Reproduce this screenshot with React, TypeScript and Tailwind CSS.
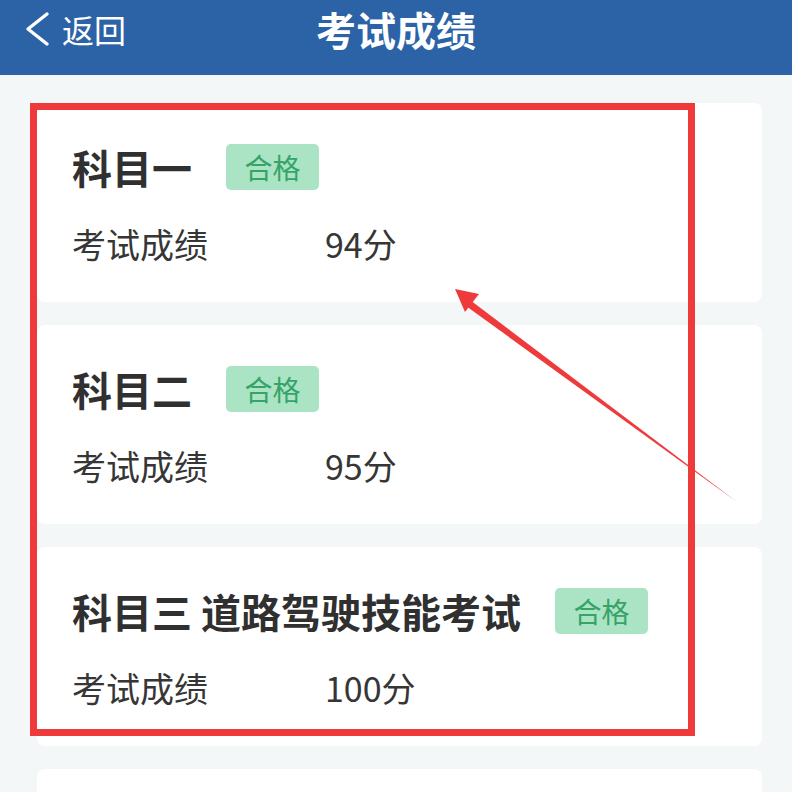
type Subject = {
  name: string;
  score: string;
};

const subjects: Subject[] = [
  { name: '科目一', score: '94分' },
  { name: '科目二', score: '95分' },
  { name: '科目三 道路驾驶技能考试', score: '100分' },
];

function ScoreCard({ s }: { s: Subject }) {
  return (
    <div className="h-[199px] shrink-0 rounded-lg bg-white pl-[35px] pt-[41px]">
      <div className="flex h-[46px] items-center">
        <span className="text-[40px] font-bold leading-[46px] text-[#303030]">{s.name}</span>
        <span className="ml-[34px] flex h-[46px] w-[93px] items-center justify-center rounded-[5px] bg-[#abe3c5] text-[28px] text-[#35a466]">
          合格
        </span>
      </div>
      <div className="mt-[34px] flex h-[40px] items-center text-[34px] leading-[40px] text-[#363636]">
        <span className="w-[253px]">考试成绩</span>
        <span>{s.score}</span>
      </div>
    </div>
  );
}

export default function App() {
  return (
    <div className="relative h-[792px] w-[792px] overflow-hidden bg-[#f4f7f8] font-['Noto_Sans_CJK_SC','Noto_Sans',sans-serif]">
      <div className="grid h-[75px] grid-cols-[1fr_auto_1fr] items-center bg-[#2c63a6] pb-[18px] text-white">
        <div className="flex items-center pl-[25px]">
          <svg width="26" height="36" viewBox="0 0 26 36" fill="none">
            <polyline points="22,3 3,18 22,33" stroke="white" strokeWidth="3.4" strokeLinecap="round" strokeLinejoin="round" />
          </svg>
          <span className="ml-[11px] text-[32px] leading-none">返回</span>
        </div>
        <h1 className="text-[40px] font-bold leading-none">考试成绩</h1>
        <div />
      </div>

      <div className="flex flex-col gap-[23px] pl-[37px] pr-[30px] pt-[28px]">
        {subjects.map((s) => (
          <ScoreCard key={s.name} s={s} />
        ))}
        <div className="h-[199px] shrink-0 rounded-lg bg-white" />
      </div>

      {/* annotation overlay */}
      <div className="absolute left-[30px] top-[103px] h-[633px] w-[665px] border-[7px] border-[#ee3a3a]" />
      <svg className="absolute left-0 top-0" width="792" height="792" viewBox="0 0 792 792">
        <polygon points="737,502 470,300 466,306" fill="#ee3a3a" />
        <polygon points="455,289 479,294 465,312" fill="#ee3a3a" />
      </svg>
    </div>
  );
}
